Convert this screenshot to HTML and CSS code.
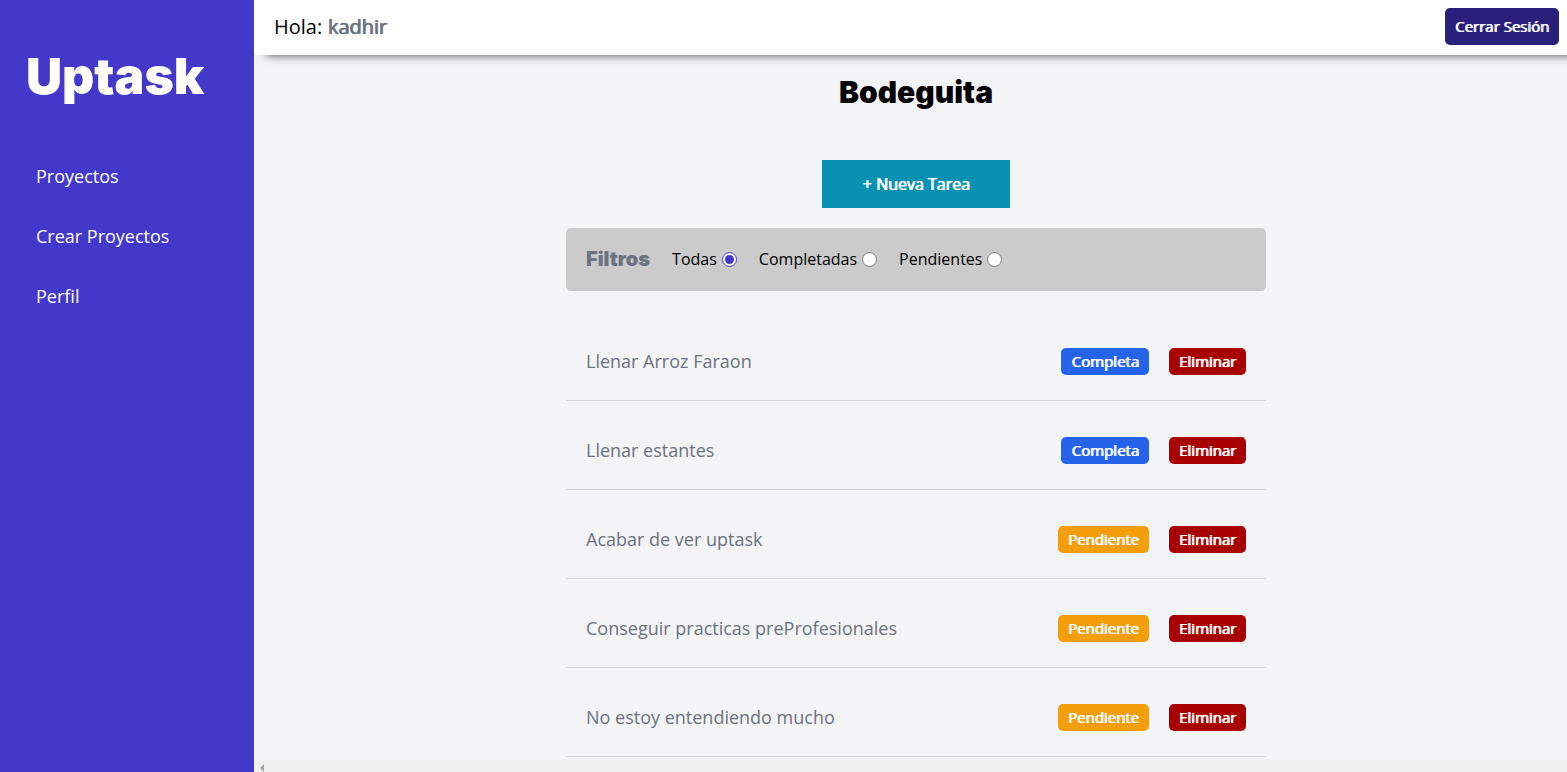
FILE: index.html
```html
<!DOCTYPE html>
<html lang="es">
<head>
<meta charset="utf-8">
<meta name="viewport" content="width=device-width, initial-scale=1">
<title>Uptask | Bodeguita</title>
<link rel="stylesheet" href="styles.css">
</head>
<body>
<div class="dashboard">
  <aside class="sidebar">
    <h2 class="logo">Uptask</h2>
    <nav class="sidebar-nav">
      <a href="#proyectos">Proyectos</a>
      <a href="#crear">Crear Proyectos</a>
      <a href="#perfil">Perfil</a>
    </nav>
  </aside>
  <div class="principal">
    <header class="barra">
      <p class="saludo">Hola: <span class="fuerte">kadhir</span></p>
      <a class="cerrar-sesion fuerte" href="#salir">Cerrar Sesión</a>
    </header>
    <main class="contenido">
      <h1 class="nombre-pagina">Bodeguita</h1>
      <div class="contenedor">
        <button class="agregar-tarea fuerte" type="button">+ Nueva Tarea</button>
        <form class="filtros">
          <h2>Filtros</h2>
          <div class="campo"><label for="todas">Todas</label><input type="radio" id="todas" name="filtro" checked></div>
          <div class="campo"><label for="completadas">Completadas</label><input type="radio" id="completadas" name="filtro"></div>
          <div class="campo"><label for="pendientes">Pendientes</label><input type="radio" id="pendientes" name="filtro"></div>
        </form>
        <ul class="tareas">
          <li class="tarea"><p>Llenar Arroz Faraon</p><div class="opciones"><button type="button" class="boton completa fuerte">Completa</button><button type="button" class="boton eliminar fuerte">Eliminar</button></div></li>
          <li class="tarea"><p>Llenar estantes</p><div class="opciones"><button type="button" class="boton completa fuerte">Completa</button><button type="button" class="boton eliminar fuerte">Eliminar</button></div></li>
          <li class="tarea"><p>Acabar de ver uptask</p><div class="opciones"><button type="button" class="boton pendiente fuerte">Pendiente</button><button type="button" class="boton eliminar fuerte">Eliminar</button></div></li>
          <li class="tarea"><p>Conseguir practicas preProfesionales</p><div class="opciones"><button type="button" class="boton pendiente fuerte">Pendiente</button><button type="button" class="boton eliminar fuerte">Eliminar</button></div></li>
          <li class="tarea"><p>No estoy entendiendo mucho</p><div class="opciones"><button type="button" class="boton pendiente fuerte">Pendiente</button><button type="button" class="boton eliminar fuerte">Eliminar</button></div></li>
        </ul>
      </div>
    </main>
    <div class="desplazamiento" aria-hidden="true">
      <svg width="4" height="8" viewBox="0 0 4 8"><path d="M4 0v8L0 4z" fill="#a3a3a3"/></svg>
    </div>
  </div>
</div>
</body>
</html>
```
FILE: styles.css
```css
*, *::before, *::after { box-sizing: border-box; }

body {
  margin: 0;
  font-family: "Open Sans", sans-serif;
  font-size: 16px;
  font-weight: 400;
  color: #000;
  background: #f3f4f6;
}

h1, h2, p, ul { margin: 0; padding: 0; }
a { text-decoration: none; }
button { font: inherit; border: 0; cursor: pointer; }

/* Thickens the strokes without changing the text's width */
.fuerte { text-shadow: 1px 0 currentColor; }

.dashboard { display: flex; height: 100vh; overflow: hidden; }

.sidebar {
  flex: 0 0 254px;
  padding: 40px 26px;
  background: #4338ca;
  color: #fff;
}
.logo {
  font-family: Inter, sans-serif;
  font-size: 50px;
  font-weight: 900;
  line-height: 72px;
}
.sidebar-nav {
  display: flex;
  flex-direction: column;
  gap: 20px;
  margin-top: 44px;
}
.sidebar-nav a {
  padding: 8px 10px;
  font-size: 18px;
  line-height: 24px;
  color: #fff;
}

.principal { flex: 1; min-width: 0; display: flex; flex-direction: column; }

.barra {
  position: relative;
  display: flex;
  justify-content: space-between;
  align-items: center;
  padding: 8px 8px 10px 20px;
  background: #fff;
  box-shadow: 12px 1px 8px rgba(0, 0, 0, 0.6);
}
.saludo { font-size: 20px; line-height: 28px; }
.saludo span { color: #6b7280; }
.cerrar-sesion {
  padding: 6px 10px;
  border-radius: 5px;
  background: #28207a;
  color: #fff;
  font-size: 15px;
  line-height: 25px;
}

.contenido { flex: 1; min-height: 0; overflow: hidden; padding: 16px 0 0 11px; }
.nombre-pagina {
  font-family: Inter, sans-serif;
  font-size: 30px;
  font-weight: 900;
  line-height: 42px;
  text-align: center;
}
.contenedor {
  display: flex;
  flex-direction: column;
  align-items: center;
  width: 90%;
  max-width: 700px;
  margin: 47px auto 0;
}
.agregar-tarea {
  padding: 12px 40px;
  line-height: 24px;
  background: #0891b2;
  color: #fff;
}

.filtros {
  display: flex;
  gap: 22px;
  width: 100%;
  margin-top: 20px;
  padding: 17px 20px;
  border-radius: 5px;
  background: #cbcbcb;
}
.filtros h2 {
  font-family: Inter, sans-serif;
  font-size: 20px;
  font-weight: 900;
  line-height: 29px;
  color: #6b7280;
}
.campo { display: flex; align-items: center; gap: 5px; line-height: 28px; }
.filtros .campo { align-self: flex-start; }
.campo input { width: 15px; height: 15px; margin: 0; accent-color: #4338ca; }

.tareas { width: 100%; margin-top: 21px; list-style: none; }
.tarea {
  display: flex;
  justify-content: space-between;
  align-items: center;
  padding: 30px 20px 20px;
  border-bottom: 1px solid #d1d5db;
  font-size: 18px;
  line-height: 38px;
  color: #6b7280;
}
.opciones { display: flex; gap: 20px; }
.boton {
  padding: 2px 10px;
  border-radius: 5px;
  font-size: 15px;
  line-height: 23px;
  color: #fff;
}
.completa { background: #2563eb; }
.pendiente { background: #f59e0b; }
.eliminar { background: #a80000; }

.desplazamiento {
  display: flex;
  align-items: flex-end;
  height: 12px;
  padding-left: 6px;
  background: #f0f0f0;
}
```
